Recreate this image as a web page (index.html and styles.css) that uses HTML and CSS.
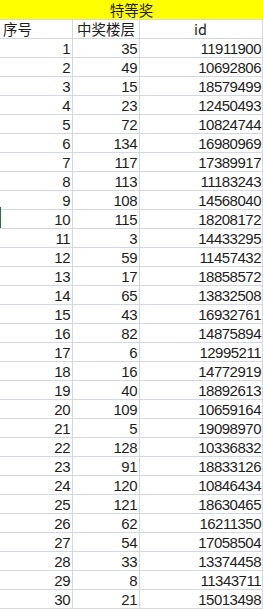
FILE: index.html
```html
<!DOCTYPE html>
<html lang="zh">
<head>
<meta charset="utf-8">
<link rel="stylesheet" href="styles.css">
</head>
<body>
<div class="sheet">
  <div class="title">特等奖</div>
  <div class="cell head left">序号</div>
  <div class="cell head center">中奖楼层</div>
  <div class="cell head center">id</div>
  <div class="cell">1</div><div class="cell">35</div><div class="cell">11911900</div>
  <div class="cell">2</div><div class="cell">49</div><div class="cell">10692806</div>
  <div class="cell">3</div><div class="cell">15</div><div class="cell">18579499</div>
  <div class="cell">4</div><div class="cell">23</div><div class="cell">12450493</div>
  <div class="cell">5</div><div class="cell">72</div><div class="cell">10824744</div>
  <div class="cell">6</div><div class="cell">134</div><div class="cell">16980969</div>
  <div class="cell">7</div><div class="cell">117</div><div class="cell">17389917</div>
  <div class="cell">8</div><div class="cell">113</div><div class="cell">11183243</div>
  <div class="cell">9</div><div class="cell">108</div><div class="cell">14568040</div>
  <div class="cell">10</div><div class="cell">115</div><div class="cell">18208172</div>
  <div class="cell">11</div><div class="cell">3</div><div class="cell">14433295</div>
  <div class="cell">12</div><div class="cell">59</div><div class="cell">11457432</div>
  <div class="cell">13</div><div class="cell">17</div><div class="cell">18858572</div>
  <div class="cell">14</div><div class="cell">65</div><div class="cell">13832508</div>
  <div class="cell">15</div><div class="cell">43</div><div class="cell">16932761</div>
  <div class="cell">16</div><div class="cell">82</div><div class="cell">14875894</div>
  <div class="cell">17</div><div class="cell">6</div><div class="cell">12995211</div>
  <div class="cell">18</div><div class="cell">16</div><div class="cell">14772919</div>
  <div class="cell">19</div><div class="cell">40</div><div class="cell">18892613</div>
  <div class="cell">20</div><div class="cell">109</div><div class="cell">10659164</div>
  <div class="cell">21</div><div class="cell">5</div><div class="cell">19098970</div>
  <div class="cell">22</div><div class="cell">128</div><div class="cell">10336832</div>
  <div class="cell">23</div><div class="cell">91</div><div class="cell">18833126</div>
  <div class="cell">24</div><div class="cell">120</div><div class="cell">10846434</div>
  <div class="cell">25</div><div class="cell">121</div><div class="cell">18630465</div>
  <div class="cell">26</div><div class="cell">62</div><div class="cell">16211350</div>
  <div class="cell">27</div><div class="cell">54</div><div class="cell">17058504</div>
  <div class="cell">28</div><div class="cell">33</div><div class="cell">13374458</div>
  <div class="cell">29</div><div class="cell">8</div><div class="cell">11343711</div>
  <div class="cell">30</div><div class="cell">21</div><div class="cell">15013498</div>
  <div class="marker"></div>
</div>
</body>
</html>
```

FILE: styles.css
```css
html, body {
  margin: 0;
  padding: 0;
  background: #ffffff;
}
.sheet {
  position: relative;
  display: grid;
  grid-template-columns: 73px 67px 123px;
  grid-template-rows: 20px;
  grid-auto-rows: 19px;
  width: 263px;
  height: 611px;
  overflow: hidden;
  font-family: "Liberation Sans", "Noto Sans CJK SC", sans-serif;
  font-size: 15px;
  letter-spacing: -0.5px;
  color: #1e1e1e;
}
.title {
  grid-column: 1 / 4;
  background: #ffff00;
  border-bottom: 1px solid #d4d8e0;
  text-align: center;
  font-family: "Noto Sans CJK SC", sans-serif;
  font-size: 14.5px;
  letter-spacing: 0;
  line-height: 19px;
}
.cell {
  border-right: 1px solid #d4d8e0;
  border-bottom: 1px solid #d4d8e0;
  text-align: right;
  padding-top: 1px;
  padding-right: 2px;
  line-height: 17px;
  white-space: nowrap;
}
.cell:nth-child(3n+1) {
  padding-right: 1px;
}
.head {
  font-family: "Noto Sans CJK SC", sans-serif;
  font-size: 14.5px;
  letter-spacing: 0;
  padding-top: 0;
  line-height: 18px;
}
.left {
  text-align: left;
  padding-left: 3px;
}
.center {
  text-align: center;
  padding-right: 0;
}
.marker {
  position: absolute;
  left: 0;
  top: 207px;
  width: 1px;
  height: 21px;
  background: #217346;
}
```
